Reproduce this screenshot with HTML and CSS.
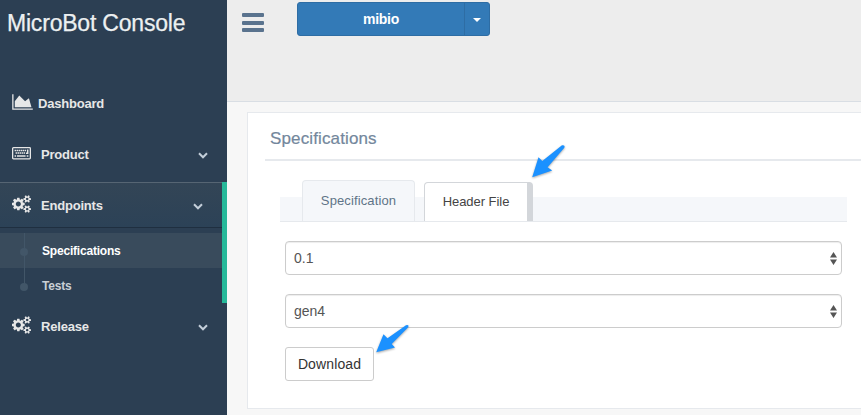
FILE: index.html
```html
<!DOCTYPE html>
<html lang="en">
<head>
<meta charset="utf-8">
<title>MicroBot Console</title>
<link rel="stylesheet" href="styles.css">
</head>
<body>
<svg class="defs" width="0" height="0">
  <symbol id="cogs" viewBox="0 0 1920 1792"><path d="M896 896q0-106-75-181t-181-75-181 75-75 181 75 181 181 75 181-75 75-181zm768 512q0-52-38-90t-90-38-90 38-38 90q0 53 37.500 90.500t90.500 37.500 90.500-37.500 37.500-90.500zm0-1024q0-52-38-90t-90-38-90 38-38 90q0 53 37.500 90.500t90.500 37.500 90.500-37.500 37.500-90.500zm-384 421v185q0 10-7 19.500t-16 10.500l-155 24q-11 35-32 76 34 48 90 115 7 11 7 20 0 12-7 19-23 30-82.500 89.500t-78.500 59.500q-11 0-21-7l-115-90q-37 19-77 31-11 108-23 155-7 24-30 24h-186q-11 0-20-7.500t-10-17.500l-23-153q-34-10-75-31l-118 89q-7 7-20 7-11 0-21-8-144-133-144-160 0-9 7-19 10-14 41-53t47-61q-23-44-35-82l-152-24q-10-1-17-9.500t-7-19.500v-185q0-10 7-19.500t16-10.500l155-24q11-35 32-76-34-48-90-115-7-11-7-20 0-12 7-20 22-30 82-89t79-59q11 0 21 7l115 90q34-18 77-32 11-108 23-154 7-24 30-24h186q11 0 20 7.500t10 17.500l23 153q34 10 75 31l118-89q8-7 20-7 11 0 21 8 144 133 144 160 0 8-7 19-12 16-42 54t-45 60q23 48 34 82l152 23q10 2 17 10.500t7 19.500zm640 533v140q0 16-149 31-12 27-30 52 51 113 51 138 0 4-4 7-122 71-124 71-8 0-46-47t-52-68q-20 2-30 2t-30-2q-14 21-52 68t-46 47q-2 0-124-71-4-3-4-7 0-25 51-138-18-25-30-52-149-15-149-31v-140q0-16 149-31 13-29 30-52-51-113-51-138 0-4 4-7 4-2 35-20t59-34 30-16q8 0 46 46.500t52 67.500q20-2 30-2t30 2q51-71 92-112l6-2q4 0 124 70 4 3 4 7 0 25-51 138 17 23 30 52 149 15 149 31zm0-1024v140q0 16-149 31-12 27-30 52 51 113 51 138 0 4-4 7-122 71-124 71-8 0-46-47t-52-68q-20 2-30 2t-30-2q-14 21-52 68t-46 47q-2 0-124-71-4-3-4-7 0-25 51-138-18-25-30-52-149-15-149-31v-140q0-16 149-31 13-29 30-52-51-113-51-138 0-4 4-7 4-2 35-20t59-34 30-16q8 0 46 46.500t52 67.500q20-2 30-2t30 2q51-71 92-112l6-2q4 0 124 70 4 3 4 7 0 25-51 138 17 23 30 52 149 15 149 31z"/></symbol>
  <symbol id="chevron" viewBox="0 0 10 7"><path d="M1 1.300l4 4 4-4" fill="none" stroke="currentColor" stroke-width="2"/></symbol>
</svg>
<div class="app">
  <aside class="sidebar">
    <div class="brand"><span>MicroBot Console</span></div>
    <nav class="menu">
      <a class="item dashboard">
        <svg class="icon area" viewBox="0 0 2048 1792"><path d="M2048 1536v128h-2048v-1536h128v1408h1920zm-384-1024l256 896h-1664v-576l448-576 576 576z"/></svg>
        <span>Dashboard</span>
      </a>
      <a class="item">
        <svg class="icon keyboard" viewBox="0 0 19 13">
          <rect x=".65" y=".65" width="17.700" height="11.200" rx=".8" fill="none" stroke="currentColor" stroke-width="1.300"/>
          <path d="M2.600 3.500h11.600M3.600 6h10" stroke="currentColor" stroke-width="1.500" stroke-dasharray="1.500 .5" fill="none"/>
          <path d="M15.700 2.600v3.700h-1.700M2.600 9h1.500M5 9h8.600M14.700 9h1.700" stroke="currentColor" stroke-width="1.500" fill="none"/>
        </svg>
        <span>Product</span>
        <svg class="chev"><use href="#chevron"/></svg>
      </a>
      <div class="group">
        <a class="item current">
          <svg class="icon cogs"><use href="#cogs"/></svg>
          <span>Endpoints</span>
          <svg class="chev"><use href="#chevron"/></svg>
        </a>
        <div class="children">
          <a class="child on"><span>Specifications</span></a>
          <a class="child"><span>Tests</span></a>
        </div>
      </div>
      <a class="item">
        <svg class="icon cogs"><use href="#cogs"/></svg>
        <span>Release</span>
        <svg class="chev"><use href="#chevron"/></svg>
      </a>
    </nav>
  </aside>
  <main class="main">
    <header class="topbar">
      <div class="burger"><i></i><i></i><i></i></div>
      <div class="split"><button class="name"><span>mibio</span></button><button class="drop"><i></i></button></div>
    </header>
    <section class="panel">
      <h2><span>Specifications</span></h2>
      <div class="tabs">
        <a class="tab"><span>Specification</span></a>
        <a class="tab active"><span>Header File</span></a>
      </div>
      <div class="form">
        <div class="select"><span>0.1</span><svg class="sort" viewBox="0 0 7 13"><path d="M0 5.500h7L3.500 0zM0 7.500h7L3.500 13z"/></svg></div>
        <div class="select"><span>gen4</span><svg class="sort" viewBox="0 0 7 13"><path d="M0 5.500h7L3.500 0zM0 7.500h7L3.500 13z"/></svg></div>
        <button class="download"><span>Download</span></button>
      </div>
    </section>
  </main>
</div>
<svg class="arrows" viewBox="0 0 861 415">
  <path d="M532.200 177.300L538.500 157.300L542.300 161L562 145.200Q565.500 145 564.300 147.800L547.600 167.200L552.200 170.500Z"/>
  <path d="M376.200 352.200L383.500 334.200L387.500 338.200L406 325.200Q409.300 324.500 408.200 327.200L391.700 344L395 347.500Z"/>
</svg>
</body>
</html>
```
FILE: styles.css
```css
* { box-sizing: border-box; }
body { margin: 0; font-family: "Liberation Sans", Arial, sans-serif; font-size: 13px; color: #73879c; overflow: hidden; }
.defs { position: absolute; }
.app { display: flex; height: 415px; background: #f7f7f7; }
span { white-space: nowrap; }
button { font-family: inherit; padding: 0; }

.sidebar { width: 227px; flex: none; background: #2c3f53; color: #e7e7e7; }
.brand { height: 80px; padding: 9px 0 0 7px; font-size: 23px; line-height: 28px; color: #ecf0f1; }
.brand span { letter-spacing: -.2px; -webkit-text-stroke: .25px #ecf0f1; }
.item { display: flex; align-items: center; height: 46px; margin-bottom: 5px; padding: 0 19px 0 12px; font-weight: bold; }
.item span { flex: 1; letter-spacing: -.2px; }
.icon { fill: currentColor; flex: none; }
.area { width: 21px; height: 18px; margin-right: 5px; margin-top: -2px; }
.keyboard { width: 19px; height: 13px; margin-right: 10px; margin-top: -2px; }
.cogs { width: 19px; height: 18px; margin-right: 10px; margin-top: -3px; }
.chev { width: 10px; height: 7px; margin-top: 2px; color: #c4cfda; }
.group { border-right: 5px solid #26b99a; height: 121px; }
.current { border-top: 1px solid #566573; border-bottom: 1px solid #1f2f40; background: linear-gradient(#334556, #2c4257); }
.child { display: flex; align-items: center; height: 35px; padding-left: 20px; font-weight: bold; font-size: 12px; letter-spacing: -.2px; color: #c9cfd5; background: linear-gradient(#425668, #425668) 24px 0 / 1px 100% no-repeat; }
.child::before { content: ""; width: 8px; height: 8px; margin: 3px 14px 0 0; border-radius: 50%; background: #425668; }
.child.on { background-color: #394b5c; color: #fff; }
.child:last-child { background-size: 1px 18px; }

.main { flex: 1; min-width: 0; }
.topbar { display: flex; height: 102px; padding: 2px 0 0 15px; background: #ededed; border-bottom: 1px solid #d9dee4; }
.burger { display: flex; flex-direction: column; gap: 3.500px; width: 22px; margin: 11px 33px 0 0; }
.burger i { height: 4px; border-radius: 1px; background: #5a738e; }
.split { display: flex; width: 193px; height: 34px; border: 1px solid #2e6da4; border-radius: 3px; background: #337ab7; }
.split button { border: 0; background: none; color: #fff; }
.split .name { flex: 1; font-size: 14px; font-weight: bold; letter-spacing: -.3px; }
.split .drop { width: 25px; border-left: 1px solid #2e6da4; display: flex; align-items: center; justify-content: center; }
.drop i { border: 4px solid transparent; border-top-color: #fff; border-bottom: 0; margin-top: 2px; }

.panel { height: 297px; margin: 10px 0 0 20px; padding: 0 0 0 17px; border: 1px solid #e6e9ed; border-right: 0; background: #fff; }
h2 { height: 48px; margin: 0; padding: 14px 0 0 5px; border-bottom: 2px solid #e6e9ed; font-size: 17px; line-height: 24px; font-weight: 400; letter-spacing: .13px; -webkit-text-stroke: .2px #73879c; }
.tabs { display: flex; align-items: flex-end; height: 61px; margin: 0 14px 0 15px; padding-left: 22px; background: linear-gradient(#f5f7fa, #f5f7fa) 0 36px / 100% 25px no-repeat; border-bottom: 1px solid #e6e9ed; }
.tab { display: flex; align-items: center; justify-content: center; width: 113px; height: 41px; margin-right: 9px; padding-bottom: 2px; border: 1px solid #e6e9ed; border-bottom: 0; border-radius: 4px 4px 0 0; background: #f5f7fa; color: #5f7487; letter-spacing: .12px; }
.tab.active { width: 109px; height: 39px; border-color: #d3d6da; border-right-width: 6px; background: #fff; color: #444; letter-spacing: -.05px; }
.form { padding: 19px 19px 0 20px; }
.select { display: flex; align-items: center; justify-content: space-between; height: 34px; margin-bottom: 19px; padding: 0 4px 0 8px; border: 1px solid #ccc; border-radius: 4px; box-shadow: inset 0 1px 1px rgba(0,0,0,.075); font-size: 14px; color: #555; }
.sort { width: 7px; height: 13px; fill: #555; }
.download { width: 89px; height: 34px; border: 1px solid #ccc; border-radius: 3px; background: #fff; color: #333; font-size: 14px; letter-spacing: .12px; }
.arrows { position: absolute; left: 0; top: 0; width: 861px; height: 415px; pointer-events: none; fill: #1b91ff; filter: drop-shadow(0 1px 1px rgba(0,0,0,.35)); }
```
